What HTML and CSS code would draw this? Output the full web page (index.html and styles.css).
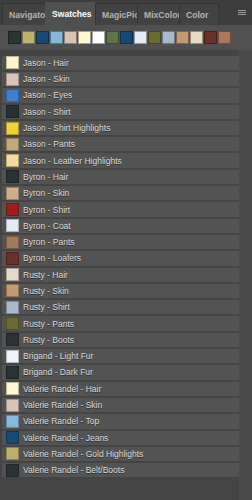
FILE: index.html
```html
<!DOCTYPE html>
<html lang="en">
<head>
  <meta charset="UTF-8" />
  <title>Swatches</title>
  <link rel="stylesheet" href="styles.css">
</head>
<body>
  <div class="panel">
    <!-- Tab bar -->
    <div class="tabs">
      <div class="tab" style="width: 44px">Navigato</div>
      <div class="tab active" style="width: 51px">Swatches</div>
      <div class="tab" style="width: 43px">MagicPic</div>
      <div class="tab" style="width: 43px">MixColor</div>
      <div class="tab" style="width: 40px">Color</div>
      <div class="menu"><span></span><span></span><span></span></div>
    </div>

    <!-- Recent swatches -->
    <div class="strip">
      <div class="chip" style="background: #2b3335"></div>
      <div class="chip" style="background: #bdb06a"></div>
      <div class="chip" style="background: #164a70"></div>
      <div class="chip" style="background: #85b9d9"></div>
      <div class="chip" style="background: #d8c2b6"></div>
      <div class="chip" style="background: #fff7cf"></div>
      <div class="chip" style="background: #ffffff"></div>
      <div class="chip" style="background: #5c7448"></div>
      <div class="chip" style="background: #164a70"></div>
      <div class="chip" style="background: #e5edf3"></div>
      <div class="chip" style="background: #6b6a30"></div>
      <div class="chip" style="background: #a9b8cc"></div>
      <div class="chip" style="background: #c49a70"></div>
      <div class="chip" style="background: #e4dac6"></div>
      <div class="chip" style="background: #6b3028"></div>
      <div class="chip" style="background: #a87a5a"></div>
    </div>

    <!-- Named swatch list -->
    <div class="body">
      <div class="list">
        <div class="row"><span class="sw" style="background: #fdf5cb"></span>Jason - Hair</div>
        <div class="row"><span class="sw" style="background: #d9c4ba"></span>Jason - Skin</div>
        <div class="row"><span class="sw" style="background: #3f7fd0"></span>Jason - Eyes</div>
        <div class="row"><span class="sw" style="background: #273033"></span>Jason - Shirt</div>
        <div class="row"><span class="sw" style="background: #efcf3a"></span>Jason - Shirt Highlights</div>
        <div class="row"><span class="sw" style="background: #c7a87e"></span>Jason - Pants</div>
        <div class="row"><span class="sw" style="background: #f6d9a0"></span>Jason - Leather Highlights</div>
        <div class="row"><span class="sw" style="background: #293133"></span>Byron - Hair</div>
        <div class="row"><span class="sw" style="background: #cfae88"></span>Byron - Skin</div>
        <div class="row"><span class="sw" style="background: #9c1f1c"></span>Byron - Shirt</div>
        <div class="row"><span class="sw" style="background: #e5edf3"></span>Byron - Coat</div>
        <div class="row"><span class="sw" style="background: #a07a5a"></span>Byron - Pants</div>
        <div class="row"><span class="sw" style="background: #6b3028"></span>Byron - Loafers</div>
        <div class="row"><span class="sw" style="background: #e4dac6"></span>Rusty - Hair</div>
        <div class="row"><span class="sw" style="background: #c49a70"></span>Rusty - Skin</div>
        <div class="row"><span class="sw" style="background: #a9b8cc"></span>Rusty - Shirt</div>
        <div class="row"><span class="sw" style="background: #6b6a30"></span>Rusty - Pants</div>
        <div class="row"><span class="sw" style="background: #2d3133"></span>Rusty - Boots</div>
        <div class="row"><span class="sw" style="background: #f0f4f8"></span>Brigand - Light Fur</div>
        <div class="row"><span class="sw" style="background: #2a3133"></span>Brigand - Dark Fur</div>
        <div class="row"><span class="sw" style="background: #fff7cf"></span>Valerie Randel - Hair</div>
        <div class="row"><span class="sw" style="background: #d8c2b6"></span>Valerie Randel - Skin</div>
        <div class="row"><span class="sw" style="background: #85b9d9"></span>Valerie Randel - Top</div>
        <div class="row"><span class="sw" style="background: #164a70"></span>Valerie Randel - Jeans</div>
        <div class="row"><span class="sw" style="background: #bdb06a"></span>Valerie Randel - Gold Highlights</div>
        <div class="row"><span class="sw" style="background: #2b3335"></span>Valerie Randel - Belt/Boots</div>
      </div>
      <div class="scroll"></div>
    </div>
  </div>
</body>
</html>
```

FILE: styles.css
```css
/* General */
body {
  margin: 0;
  background-color: #484848;
  font-family: "Liberation Sans", Arial, sans-serif;
}
.panel {
  width: 252px;
  height: 500px;
  display: flex;
  flex-direction: column;
  overflow: hidden;
}
/* Tab bar */
.tabs {
  height: 25px;
  display: flex;
  align-items: flex-end;
  padding-left: 2px;
  background-color: #3d3d3d;
  box-sizing: border-box;
}
.tab {
  height: 22px;
  box-sizing: border-box;
  padding: 6px 0 0 6px;
  font-size: 8.6px;
  font-weight: bold;
  color: #b4b4b4;
  white-space: nowrap;
  overflow: hidden;
  background-color: #424242;
  border: 1px solid #333;
  border-bottom: none;
  margin-right: -1px;
}
.tab.active {
  height: 23px;
  color: #fff;
  background-color: #505050;
  border-color: #505050;
}
.menu {
  margin-left: auto;
  margin-right: 6px;
  align-self: center;
  display: flex;
  flex-direction: column;
  gap: 1px;
}
.menu span {
  display: block;
  width: 8px;
  height: 1px;
  background-color: #9a9a9a;
}
/* Recent swatches strip */
.strip {
  height: 25px;
  box-sizing: border-box;
  padding: 6px 0 0 8px;
  display: flex;
  gap: 1px;
  background-color: #505050;
}
.chip {
  width: 13px;
  height: 13px;
  box-sizing: border-box;
  border: 1px solid rgba(0, 0, 0, 0.35);
}
/* List */
.body {
  flex: 1;
  display: flex;
  background-color: #484848;
}
.list {
  flex: 1;
  padding: 5.7px 0 0 2px;
  background-color: #444;
}
.row {
  height: 14.3px;
  margin-bottom: 2px;
  display: flex;
  align-items: center;
  background-color: #535353;
  font-size: 8.5px;
  color: #dedede;
  text-shadow: 0 1px 0 rgba(0, 0, 0, 0.5);
  white-space: nowrap;
}
.sw {
  width: 13px;
  height: 13px;
  margin: 0 4px;
  box-sizing: border-box;
  border: 1px solid rgba(0, 0, 0, 0.25);
  flex-shrink: 0;
}
.scroll {
  width: 13px;
  background-color: #4a4a4a;
}
```
